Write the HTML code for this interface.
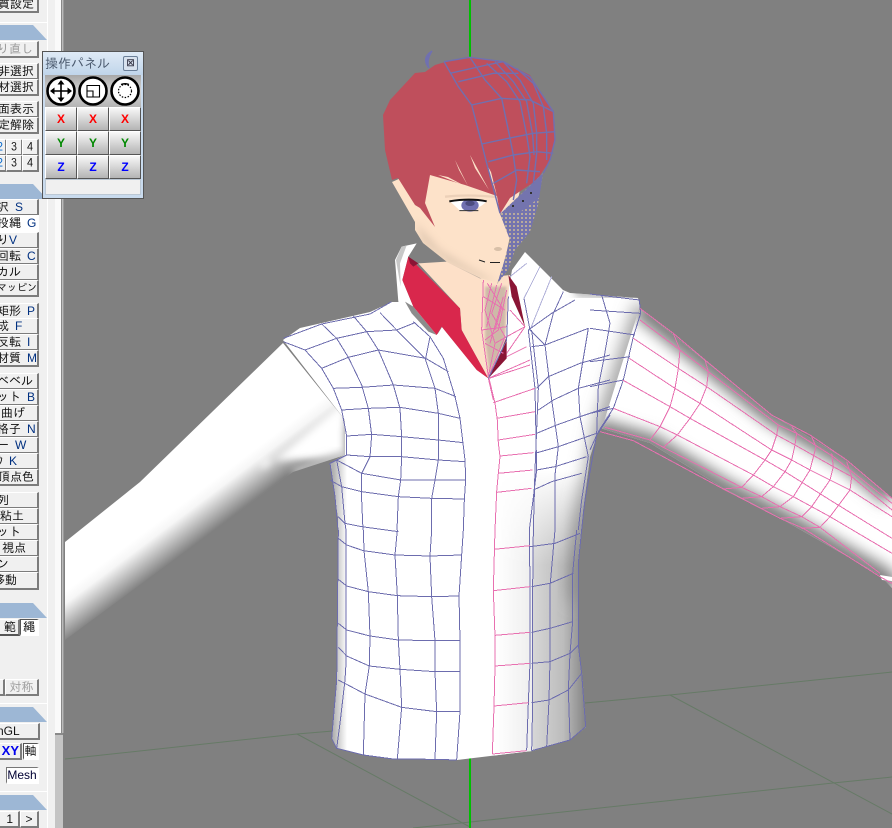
<!DOCTYPE html>
<html><head><meta charset="utf-8">
<style>
html,body{margin:0;padding:0;background:#808080;overflow:hidden}
#r{position:relative;width:892px;height:828px;overflow:hidden;background:#808080;font-family:"Liberation Sans","IPAGothic","Noto Sans CJK JP",sans-serif}
svg{position:absolute;left:0;top:0}
.a{position:absolute}
.b{position:absolute;box-sizing:border-box;left:-4px;width:43px;height:17px;background:#f0f0f0;border:1px solid #fff;border-right:2px solid #7c7c7c;border-bottom:2px solid #7c7c7c;font:12px/14px "IPAGothic","Noto Sans CJK JP",sans-serif;color:#111;text-align:right;padding-right:2px;white-space:nowrap;overflow:hidden}
.b i{font-style:normal;font-family:"Liberation Sans",sans-serif;color:#003080;font-size:12px}
.h{position:absolute;left:0;width:48px;height:15px;background:#9db7d5;clip-path:polygon(0 0,33px 0,47px 100%,0 100%)}
.w{position:absolute;box-sizing:border-box;width:32px;height:24px;background:linear-gradient(#f8f8f8,#b4b4b4);border:1px solid #fff;border-right:1px solid #555;border-bottom:1px solid #555;text-align:center;font:bold 12px/22px "Liberation Sans",sans-serif}
</style></head><body><div id="r">
<svg width="892" height="828" viewBox="0 0 892 828">
<defs>
<linearGradient id="gw" gradientUnits="userSpaceOnUse" x1="495" y1="0" x2="586" y2="0">
<stop offset="0" stop-color="#fff"/><stop offset=".41" stop-color="#eee"/><stop offset=".42" stop-color="#d6d6d6"/><stop offset=".75" stop-color="#bcbcbc"/><stop offset="1" stop-color="#848484"/></linearGradient>
<linearGradient id="fv" gradientUnits="userSpaceOnUse" x1="0" y1="470" x2="0" y2="565">
<stop offset="0" stop-color="#000"/><stop offset="1" stop-color="#fff"/></linearGradient>
<linearGradient id="gs" gradientUnits="userSpaceOnUse" x1="333" y1="0" x2="347" y2="0">
<stop offset="0" stop-color="#b0b0b0"/><stop offset="1" stop-color="#fff"/></linearGradient>
<linearGradient id="gl" gradientUnits="userSpaceOnUse" x1="155" y1="524" x2="179" y2="556">
<stop offset="0" stop-color="#fff"/><stop offset=".25" stop-color="#f6f6f6"/><stop offset="1" stop-color="#828282"/></linearGradient>
<mask id="mv"><rect x="0" y="0" width="892" height="828" fill="url(#fv)"/></mask>
<clipPath id="cb"><path d="M283,340L300,328L370,312L392,302L405,302L437,335L442,327L477,370L488,378L505,310L512,270L525,252L563,290L570,293L638,298L640,306L603,425L597,435L590,457L583,510L581,530L578,563L578,645L582,673L586,727L570,740L532,751L457,760L393,759L363,755L337,748L332,738L337,680L338,530L338,517L330,463L345,455L345,420Z"/></clipPath>
<clipPath id="cf"><path d="M392,182L415,222L415,230L423,243L447,262L480,278L498,283L506,255L520,190L500,165L430,165Z"/></clipPath>
<clipPath id="cra"><path d="M640,308L772,415L847,460L892,498L892,588L880,575L780,518L723,488L650,443L600,428L620,350Z"/></clipPath>
<clipPath id="cla"><path d="M65,542L140,482L283,343L345,420L345,455L293,472L65,640Z"/></clipPath>
<filter id="bl" x="-30%" y="-30%" width="160%" height="160%"><feGaussianBlur stdDeviation="9"/></filter>
<filter id="b4" x="-50%" y="-50%" width="200%" height="200%"><feGaussianBlur stdDeviation="4"/></filter>
<filter id="b6" x="-15%" y="-30%" width="130%" height="160%"><feGaussianBlur stdDeviation="7"/></filter>
<pattern id="dm" width="4" height="4" patternUnits="userSpaceOnUse"><rect width="4" height="4" fill="#7474ae"/><rect x="1" y="1" width="2" height="2" fill="#b8aa9c"/></pattern>
</defs>
<g fill="none" stroke="#667a66" stroke-width="1">
<path d="M65,759L297,734L333,731"/><path d="M297,734L470,827"/><path d="M413,828L480,821"/>
<path d="M585,703L670,695L892,672"/><path d="M670,695L892,814"/><path d="M470,822L833,783L892,777"/>
</g>
<rect x="469" y="0" width="2" height="60" fill="#00c000"/><rect x="469" y="757" width="2" height="71" fill="#00c000"/>

<!-- left arm -->
<path d="M65,542L140,482L283,343L345,420L345,455L293,472L65,640Z" fill="url(#gl)"/>
<g clip-path="url(#cla)">
<path d="M262,470L345,400V460H262Z" fill="#fff" filter="url(#b4)"/>
<path d="M293,472L345,455" fill="none" stroke="#c0c0c0" stroke-width="9" filter="url(#b4)"/>
</g>
<!-- right arm -->
<path d="M640,308L772,415L847,460L892,498L892,588L880,575L780,518L723,488L650,443L600,428L620,350Z" fill="#fff"/>
<g clip-path="url(#cra)" fill="none" stroke="#808080">
<path d="M640,306L772,413L847,458L892,496" stroke-width="24" filter="url(#b6)"/>
<path d="M595,430L650,445L723,490L780,520L880,577L892,590" stroke-width="24" filter="url(#b6)"/>
</g>
<path d="M880,575L892,577V581L882,580Z" fill="#fff"/>

<!-- body -->
<path d="M283,340L300,328L370,312L392,302L405,302L437,335L442,327L477,370L488,378L505,310L512,270L525,252L563,290L570,293L638,298L640,306L603,425L597,435L590,457L583,510L581,530L578,563L578,645L582,673L586,727L570,740L532,751L457,760L393,759L363,755L337,748L332,738L337,680L338,530L338,517L330,463L345,455L345,420Z" fill="#fff"/>
<g clip-path="url(#cb)">
<rect x="495" y="470" width="95" height="295" fill="url(#gw)" mask="url(#mv)"/>
<path d="M645,305L603,430L585,520L578,600" fill="none" stroke="#8a8a8a" stroke-width="16" filter="url(#bl)"/>
<path d="M575,292L640,296" fill="none" stroke="#aaa" stroke-width="8" filter="url(#b4)"/>
<rect x="329" y="455" width="18" height="300" fill="url(#gs)"/>
</g>

<!-- back collar left -->
<g transform="translate(370 230) scale(.33333)">
<path d="M140,40L95,50L75,90L85,215L120,250L175,320L210,320L130,230L97,150L115,80Z" fill="#fff"/>
<path d="M105,215L130,230L200,315L175,305L125,250Z" fill="#8c8c8c"/>
<path d="M78,90L95,50L110,46L90,100L92,170Z" fill="#c8c8c8"/>
<!-- neck -->
<path d="M145,100L270,235L275,300L355,445L405,330L420,135L330,145L230,95Z" fill="#fde0c8"/>
<path d="M345,170L410,170L405,340L358,430L345,330Z" fill="#a99a8e" filter="url(#b4)" opacity=".55"/>
<!-- red collar -->
<path d="M115,80L270,235L275,300L355,445L320,420L215,290L200,315L130,230L97,150Z" fill="#d9274c"/>
<path d="M115,80L145,100L130,110L120,100Z" fill="#8a1535"/>
<path d="M415,135L440,170L465,290L425,200Z" fill="#8a1535"/>
<path d="M410,320L385,385L355,445L410,385Z" fill="#8a1535"/>
<g fill="none" stroke="#e870b0" stroke-width="3" shape-rendering="crispEdges">
<path d="M340,150L335,300L355,440M365,160L345,240L375,340L355,440M395,160L365,250L405,320L360,430M410,180L385,300L345,330M340,200L405,240M335,300L410,290M345,340L400,370M375,340L410,320M352,160L395,230L375,300M380,165L350,290M400,200L360,340"/>
<path d="M355,445L370,510M355,445L480,390M410,380L470,350M410,370L465,290M420,240L465,290M410,320L465,290"/>
</g>
<g fill="none" stroke="#6f6fb0" stroke-width="3" shape-rendering="crispEdges"><path d="M355,445L410,330L415,200"/></g>
<g fill="none" stroke-width="3" shape-rendering="crispEdges">
<path d="M470,100L420,140M510,110L462,205M545,140L480,300" stroke="#b0b0d8"/>
<path d="M580,185L550,250L525,345M462,205L480,300L525,345" stroke="#7070b0"/>
</g>
</g>

<!-- face -->
<path d="M392,182L415,222L415,230L423,243L447,262L480,278L498,283L506,255L520,190L500,165L430,165Z" fill="#fde2c9"/>
<g clip-path="url(#cf)">
<path d="M415,222L423,243L447,262L480,278L498,283L470,268L440,250Z" fill="#c9b29e" filter="url(#b4)" opacity=".55"/>
<ellipse cx="498" cy="249" rx="4" ry="2" fill="#d8c0a8"/>
</g>
<!-- mouth -->
<path d="M479,260L485,262M490,262.500H500" stroke="#222" stroke-width="1" fill="none"/>
<!-- eye -->
<g transform="translate(370 40) scale(.33333)">
<path d="M240,484Q300,472 350,484Q320,515 270,512Z" fill="#fff"/>
<ellipse cx="300" cy="496" rx="26" ry="19" fill="#6f6fb0"/>
<ellipse cx="300" cy="490" rx="14" ry="8" fill="#4c4c80"/>
<path d="M238,484Q300,474 350,484" fill="none" stroke="#111" stroke-width="6"/>
<path d="M268,512H325" stroke="#333" stroke-width="3"/>
<path d="M225,470Q300,462 385,472" fill="none" stroke="#ecd0b8" stroke-width="7"/>
</g>
<!-- hair -->
<path d="M383,115L390,100L415,73L425,72L435,65L445,62L467,57L503,62L530,75L542,95L553,112L555,140L550,160L537,180L510,198L500,214L497,196L465,185L430,175L425,203L435,227L420,208L415,205L398,178L392,180L385,150Z" fill="#bf4f5c"/>
<path d="M438,175L463,185L448,177ZM455,160L468,186L459,170ZM470,155L489,190L475,168ZM487,165L497,196L491,172Z" fill="#fde2c9"/>
<!-- top curl -->
<path d="M432,51Q421,58 429,68Q426,60 432,51Z" fill="#7070b0" stroke="#7070b0" stroke-width="1.500"/>
<!-- dense mesh -->
<path d="M500,214L543,173L538,205L530,232L515,250L508,270L497,284L504,262L510,240Z" fill="url(#dm)"/>
<path d="M503,212L543,173L539,198L520,212Z" fill="#7474ae"/>
<path d="M512,205h2v2h-2zM522,200h2v2h-2zM530,192h2v2h-2z" fill="#333"/>
<g transform="translate(370 40) scale(.33333)" fill="none" stroke="#7070b0" stroke-width="4.200">
<path d="M222,65L300,52L400,65L480,110L550,215L555,300L540,360L520,400"/>
<path d="M222,65L265,140L305,195L335,310L350,370L390,520"/>
<path d="M240,100L350,75L400,65M265,125L370,100L445,100M305,195L395,175L480,180L550,215M335,312L415,295L490,280L555,275M355,365L430,345L500,335L550,340M370,430L440,390L510,395"/>
<path d="M300,52L345,120L395,175L420,295L430,345L440,420L430,480M350,70L410,125L450,185L470,285L480,350L470,430M400,65L450,120L490,190L500,280L500,340L490,430M440,85L490,130L520,200L530,280L530,360M375,65L430,125L470,185L488,285L492,345"/>
</g>

<!-- meshes -->
<g fill="none" stroke-width="3" shape-rendering="crispEdges">
<g transform="translate(280 300) scale(.33333)" stroke="#6c6cae">
<path d="M10,115L125,72L270,42L335,5"/>
<path d="M10,125L75,150L125,205L160,265L185,330L200,408L200,465L150,490L165,590L174,690"/>
<path d="M125,72L170,115L205,172L245,255L265,325L275,405L270,470L245,520L245,600L249,690"/>
<path d="M220,48L260,95L295,150L340,255L360,325L365,410L365,470L362,540L355,590L351,690"/>
<path d="M300,38L350,90L435,175L465,265L475,340L475,420L475,480L465,540L455,595L455,690"/>
<path d="M400,65L450,110L437,175M450,110L490,175L525,290L540,355L555,480L557,540L553,600L550,690"/>
<path d="M75,150L170,115L260,95L350,90L405,68M125,205L205,172L295,150L437,175L505,215M160,265L245,262L340,255L465,265L528,290M185,330L265,325L360,322L475,340L540,355M200,408L275,403L365,410L475,420L550,428M200,465L270,470L365,470L475,480L555,485M170,480L245,520L362,540L465,540L557,540M150,540L185,560L245,575L355,590L455,595L553,597M175,650L195,670L245,680L355,695M170,480L185,560L195,670L198,690"/>
<path d="M745,90L765,265L770,510L748,690M755,90L775,265L765,510L760,690M795,135L815,300L835,440L825,525L825,690M925,85L895,265L900,350L925,470L905,600L895,690M990,345L950,405L938,470L915,600L905,690"/>
<path d="M745,90L815,40L885,0M755,140L795,135L925,85M770,265L805,230L900,190L990,165M775,330L820,300L895,265L990,240M770,400L830,375L900,350L990,320M765,460L835,440L950,400M770,510L825,500L920,470M760,570L815,545L905,520"/>
</g>
<g transform="translate(280 300) scale(.33333)" stroke="#e870b0">
<path d="M627,235L645,310L652,360L655,430L660,470L655,520L650,575L645,690"/>
<path d="M627,235L750,195M640,308L765,265M650,355L765,335M655,420L765,403M660,468L760,458M655,520L758,510M650,577L755,565"/>
</g>
<g transform="translate(320 530) scale(.33333)" stroke="#6c6cae">
<path d="M55,0L50,450L35,625L50,655L130,675L220,687L345,688L410,690"/>
<path d="M55,25L80,45L130,62L225,75L330,78L425,75M55,148L80,168L145,185L232,197L335,200L417,198M55,280L80,300L150,318L235,330L345,332L420,332M55,352L80,378L148,408L240,418L345,425L420,425M55,450L135,492L245,532L350,545L420,545"/>
<path d="M78,0L78,400L75,450L60,580L50,655M130,0L132,62L145,185L150,318L148,408L135,492L130,675M232,0L225,75L232,197L235,330L240,418L245,532L232,687M335,0L330,78L335,200L345,332L345,425L350,545L345,688M430,0L425,75L417,198L420,332L420,425L420,545L410,690"/>
<path d="M628,0L630,170L630,307L630,400L625,518L620,662M640,0L638,170L638,307L638,400L638,518L635,662M705,0L690,170L690,295L690,395L687,510L680,650M770,0L758,130L758,275L750,370L745,480L750,630M785,0L775,100L775,345L785,430L797,590L750,630L635,662"/>
<path d="M630,50L705,40L780,10M635,170L690,160L760,130M635,307L690,295L758,275M635,400L690,395L750,370L775,345M635,518L687,510L745,480L785,430"/>
</g>
<g transform="translate(320 530) scale(.33333)" stroke="#e870b0">
<path d="M525,0L520,180L525,320L525,410L522,530L517,672"/>
<path d="M522,58L630,47M520,182L630,170M525,316L630,307M525,408L630,400M522,528L625,518M517,672L620,662"/>
</g>
<g transform="translate(590 290) scale(.33333)" stroke="#6c6cae">
<path d="M0,12L148,30L152,70L130,140L100,270L70,355L25,425L0,480"/>
<path d="M0,60L150,70M0,115L135,135M0,215L120,200M0,290L100,270M0,370L70,355"/>
<path d="M35,15L60,100L40,215L25,290L20,430"/>
</g>
<g transform="translate(590 290) scale(.33333)" stroke="#e870b0">
<path d="M150,55L250,130L345,210L545,375L660,435L770,510L906,625"/>
<path d="M150,90L270,180L355,245L565,405L620,430L730,500L906,640"/>
<path d="M130,145L265,235L350,290L560,435L615,465L730,530L785,560L906,660"/>
<path d="M118,205L255,295L330,340L545,480L605,510L660,540L720,570L780,600L906,680"/>
<path d="M98,270L240,350L300,385L525,510L585,545L720,630L906,745"/>
<path d="M70,355L210,410L262,435L490,555L550,590L610,620L665,650L720,680L906,790"/>
<path d="M45,412L180,450L220,472L455,592L515,620L570,650L635,680L690,712L870,850"/>
<path d="M30,425L130,452L400,597L570,685L640,715L870,860L906,880"/>
<path d="M250,130L270,180L265,235L255,295L240,350L210,410L180,450"/>
<path d="M345,210L355,245L350,290L330,340L300,385L262,435L220,472"/>
<path d="M565,405L560,435L545,480L525,510L490,555L455,592L400,597"/>
<path d="M605,410L620,430L615,465L605,510L585,545L550,590L515,620L455,625"/>
<path d="M665,440L678,470L660,540L610,620L570,650L515,655"/>
<path d="M725,490L730,530L720,570L665,650L635,680L570,685"/>
<path d="M770,515L785,560L780,600L720,680L690,712L635,715"/>
</g>
</g>
</svg>

<!-- left column -->
<div class="a" style="left:0;top:0;width:62px;height:828px;background:#f0f0f0"></div>
<div class="a" style="left:47px;top:0;width:1px;height:828px;background:#fff"></div>
<div class="a" style="left:55px;top:0;width:6px;height:733px;background:#fafafa"></div>
<div class="a" style="left:55px;top:733px;width:8px;height:95px;background:#c4c4c4"></div>
<div class="a" style="left:55px;top:733px;width:8px;height:2px;background:#8a8a8a"></div>
<div class="a" style="left:61px;top:0;width:1px;height:733px;background:#888"></div>
<div class="a" style="left:62px;top:0;width:1px;height:733px;background:#bbb"></div>
<div class="a" style="left:63px;top:0;width:1px;height:733px;background:#999"></div>

<div class="h" style="top:25px"></div><div class="h" style="top:184px"></div><div class="h" style="top:603px"></div><div class="h" style="top:707px"></div><div class="h" style="top:795px"></div>
<div class="a" style="left:0;top:22px;width:47px;height:1px;background:#fff"></div>
<div class="a" style="left:0;top:703px;width:47px;height:1px;background:#fff"></div>
<div class="a" style="left:0;top:791px;width:47px;height:1px;background:#fff"></div>

<div class="b" style="top:-4px;height:17px;padding-right:3px">質設定</div>
<div class="b" style="top:41px;color:#9a9a9a;padding-right:7px">り直し</div>
<div class="b" style="top:63px;padding-right:3px">非選択</div><div class="b" style="top:79px;padding-right:3px">材選択</div>
<div class="b" style="top:101px;padding-right:3px">面表示</div><div class="b" style="top:117px;padding-right:3px">定解除</div>
<div class="b" style="top:139px;left:-8px;width:15px;padding-right:2px;color:#06c">2</div><div class="b" style="top:139px;left:6px;width:17px;text-align:center;padding:0">3</div><div class="b" style="top:139px;left:22px;width:17px;text-align:center;padding:0">4</div>
<div class="b" style="top:155px;left:-8px;width:15px;padding-right:2px;color:#06c">2</div><div class="b" style="top:155px;left:6px;width:17px;text-align:center;padding:0">3</div><div class="b" style="top:155px;left:22px;width:17px;text-align:center;padding:0">4</div>

<div class="b" style="top:199px;padding-right:26px">沢 <i>S</i></div>
<div class="b" style="top:215px;background:#fff;border-color:#fff;padding-right:3px">投縄 <i>G</i></div>
<div class="b" style="top:232px;padding-right:26px">り<i>V</i></div>
<div class="b" style="top:248px;padding-right:4px">回転 <i>C</i></div>
<div class="b" style="top:264px;padding-right:24px">カル</div>
<div class="b" style="top:280px;font-size:10px;padding:0">マッピング</div>
<div class="b" style="top:303px;padding-right:14px">矩形 <i>P</i></div>
<div class="b" style="top:318px;padding-right:15px">成 <i>F</i></div>
<div class="b" style="top:334px;padding-right:7px">反転 <i>I</i></div>
<div class="b" style="top:350px;padding-right:4px">材質 <i>M</i></div>
<div class="b" style="top:373px;padding-right:6px">ベベル</div>
<div class="b" style="top:389px;padding-right:17px">ット <i>B</i></div>
<div class="b" style="top:405px;padding-right:12px">曲げ</div>
<div class="b" style="top:421px;padding-right:4px">格子 <i>N</i></div>
<div class="b" style="top:437px;padding-right:17px">ー <i>W</i></div>
<div class="b" style="top:453px;padding-right:25px">ｸ <i>K</i></div>
<div class="b" style="top:469px;padding-right:3px">頂点色</div>
<div class="b" style="top:492px;padding-right:31px">列</div>
<div class="b" style="top:508px;left:-20px;width:59px;padding-right:13px">紙粘土</div>
<div class="b" style="top:524px;padding-right:27px">ット</div>
<div class="b" style="top:540px;padding-right:11px">視点</div>
<div class="b" style="top:556px;padding-right:28px">ン</div>
<div class="b" style="top:572px;left:-20px;width:59px;height:18px;padding-right:20px">移動</div>
<div class="b" style="top:619px;width:24px;border-bottom-color:#555;padding-right:2px">範</div>
<div class="b" style="top:619px;left:20px;width:19px;background:#fff;border-color:#555 #fff #fff #555;text-align:center;padding:0">繩</div>
<div class="b" style="top:679px;width:9px;padding:0"></div>
<div class="b" style="top:679px;left:5px;width:34px;color:#a0a0a0;text-align:center;padding:0">対称</div>
<div class="b" style="top:723px;width:44px;padding-right:21px;font-family:'Liberation Sans',sans-serif">nGL</div>
<div class="b" style="top:743px;width:26px;padding-right:1px;font:bold 13px/14px 'Liberation Sans',sans-serif;color:#00e">XY</div>
<div class="b" style="top:743px;left:23px;width:16px;background:#fff;border-color:#555 #fff #fff #555;text-align:center;padding:0">軸</div>
<div class="b" style="top:767px;left:6px;width:33px;background:#fff;border-color:#777 #fff #fff #777;text-align:center;padding:0;font:12px/15px 'Liberation Sans',sans-serif;color:#003">Mesh</div>
<div class="b" style="top:811px;width:24px;text-align:right;padding-right:5px;font-family:'Liberation Sans',sans-serif">1</div>
<div class="b" style="top:811px;left:20px;width:19px;text-align:center;padding:0;font-family:'Liberation Sans',sans-serif">&gt;</div>

<!-- panel window -->
<div class="a" style="left:42px;top:51px;width:102px;height:148px;box-sizing:border-box;border:1px solid #555;background:#c9dbee"></div>
<div class="a" style="left:43px;top:52px;width:100px;height:23px;background:linear-gradient(#dfeaf6,#c0d5ea)"></div>
<div class="a" style="left:45px;top:56px;font:13px/15px 'IPAGothic','Noto Sans CJK JP',sans-serif;color:#4d5c70">操作パネル</div>
<div class="a" style="left:123px;top:56px;width:15px;height:15px;box-sizing:border-box;border:1px solid #6b7f98;border-radius:2px;background:#d8e2ee;font:bold 9px/13px 'Liberation Sans',sans-serif;text-align:center;color:#334">☒</div>
<div class="a" style="left:45px;top:75px;width:96px;height:32px;background:linear-gradient(#a8a8a8,#d4d4d4 50%,#b4b4b4)"></div>
<svg class="a" width="102" height="34" viewBox="0 0 102 34" style="left:42px;top:74px">
<g fill="#fff" stroke="#000" stroke-width="2.6"><circle cx="19" cy="17" r="13.5"/><circle cx="51" cy="17" r="13.5"/><circle cx="83" cy="17" r="13.5"/></g>
<path d="M19,8V26M10,17H28" stroke="#000" stroke-width="1.6" fill="none"/>
<path d="M19,6L15.5,10.5H22.5ZM19,28L15.5,23.500H22.5ZM8,17L12.500,13.500V20.500ZM30,17L25.500,13.500V20.500Z" fill="#000"/>
<path d="M45,11.500H57.500V23H45ZM45,17H51V23" stroke="#000" stroke-width="1.100" fill="none"/>
<circle cx="83" cy="17" r="6.500" fill="none" stroke="#000" stroke-width="1.200" stroke-dasharray="1.500 1.500"/>
<path d="M79,10.500Q83,9 87,10.500" fill="none" stroke="#000" stroke-width="1.400"/>
</svg>
<div class="w" style="left:45px;top:107px;color:#f00">X</div><div class="w" style="left:77px;top:107px;color:#f00">X</div><div class="w" style="left:109px;top:107px;color:#f00">X</div>
<div class="w" style="left:45px;top:131px;color:#080">Y</div><div class="w" style="left:77px;top:131px;color:#080">Y</div><div class="w" style="left:109px;top:131px;color:#080">Y</div>
<div class="w" style="left:45px;top:155px;color:#00f">Z</div><div class="w" style="left:77px;top:155px;color:#00f">Z</div><div class="w" style="left:109px;top:155px;color:#00f">Z</div>
<div class="a" style="left:45px;top:179px;width:96px;height:16px;background:#f0f0f0;box-sizing:border-box;border:1px solid #bcc8d4"></div>
</div></body></html>
